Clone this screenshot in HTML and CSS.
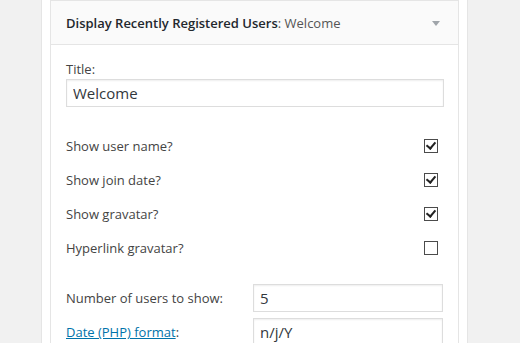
FILE: index.html
```html
<!DOCTYPE html>
<html lang="en">
<head>
    <meta charset="UTF-8">
    <title>Widget - Display Recently Registered Users</title>
    <link rel="stylesheet" href="styles.css">
</head>
<body>
<div class="sidebar">
    <div class="widget">
        <div class="widget-top">
            <h3>Display Recently Registered Users<span class="in-title">: Welcome</span></h3>
            <span class="toggle"></span>
        </div>
        <div class="widget-inside">
            <p class="field">
                <label for="title">Title:</label>
                <input type="text" id="title" class="wide" value="Welcome">
            </p>
            <div class="checks">
                <div class="check-row"><span>Show user name?</span><span class="box checked"></span></div>
                <div class="check-row"><span>Show join date?</span><span class="box checked"></span></div>
                <div class="check-row"><span>Show gravatar?</span><span class="box checked"></span></div>
                <div class="check-row"><span>Hyperlink gravatar?</span><span class="box"></span></div>
            </div>
            <div class="pair-row">
                <label for="number">Number of users to show:</label>
                <input type="text" id="number" value="5">
            </div>
            <div class="pair-row">
                <label for="format"><a href="#">Date (PHP) format</a>:</label>
                <input type="text" id="format" value="n/j/Y">
            </div>
        </div>
    </div>
</div>
</body>
</html>
```

FILE: styles.css
```css
body {
    margin: 0; background: #f1f1f1; font-family: "Open Sans", sans-serif; font-size: 13px;
    color: #444; height: 343px; overflow: hidden;
}
.sidebar {
    margin-left: 41px; width: 409px; padding: 0 8px; background: #fff;
    border-left: 1px solid #e5e5e5; border-right: 1px solid #e5e5e5; height: 343px;
}
.widget { border: 1px solid #e5e5e5; border-bottom: none; }
.widget-top {
    height: 43px; background: #fafafa; border-bottom: 1px solid #e5e5e5;
    display: flex; align-items: center; justify-content: space-between; padding: 0 18px 0 15px;
}
.widget-top h3 { margin: 0; font-size: 13px; font-weight: 600; color: #23282d; padding-top: 1px; }
.in-title { font-weight: 400; color: #555; }
.toggle {
    width: 0; height: 0; border-left: 4px solid transparent; border-right: 4px solid transparent;
    border-top: 5px solid #a0a5aa; margin-top: 1px;
}
.widget-inside { padding: 14px 15px 0 15px; }
.field { margin: 0; }
.field label { display: block; line-height: 20px; }
input {
    box-sizing: border-box; height: 28px; border: 1px solid #ddd; box-shadow: inset 0 1px 2px rgba(0, 0, 0, 0.07);
    font-family: "Open Sans", sans-serif; font-size: 15px; color: #32373c; padding: 0 6px; margin: 0;
    background: #fff;
}
.wide { width: 378px; }
.checks { margin-top: 22px; margin-bottom: 19px; }
.check-row {
    display: flex; justify-content: space-between; align-items: center; height: 34px; padding-right: 5px;
}
.box {
    width: 12px; height: 12px; border: 1px solid #4b4b4b; background: #fff; position: relative;
}
.box.checked::after {
    content: ""; position: absolute; left: 3px; top: 0px; width: 4px; height: 7px;
    border: solid #222; border-width: 0 2px 2px 0; transform: rotate(40deg);
}
.pair-row { display: flex; align-items: center; justify-content: space-between; margin-bottom: 6px; width: 377px; }
.pair-row input { width: 190px; }
.pair-row a { color: #0073aa; text-decoration: underline; }
```
